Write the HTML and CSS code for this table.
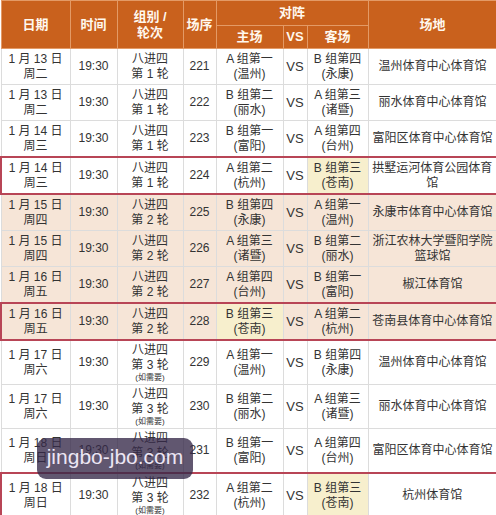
FILE: index.html
```html
<!DOCTYPE html>
<html lang="zh">
<head>
<meta charset="utf-8">
<title>赛程</title>
<link rel="stylesheet" href="styles.css">
</head>
<body>
<div class="wrap">
<table class="sched">
<colgroup>
<col class="c-date"><col class="c-time"><col class="c-round"><col class="c-no"><col class="c-home"><col class="c-vs"><col class="c-away"><col class="c-venue">
</colgroup>
<thead>
<tr class="h1">
<th rowspan="2">日期</th>
<th rowspan="2">时间</th>
<th rowspan="2">组别 /<br>轮次</th>
<th rowspan="2">场序</th>
<th colspan="3" class="dz">对阵</th>
<th rowspan="2">场地</th>
</tr>
<tr class="h2">
<th>主场</th><th>VS</th><th>客场</th>
</tr>
</thead>
<tbody>
<tr><td>1 月 13 日<br>周二</td><td>19:30</td><td>八进四<br>第 1 轮</td><td>221</td><td>A 组第一<br>(温州)</td><td class="vs">VS</td><td>B 组第四<br>(永康)</td><td>温州体育中心体育馆</td></tr>
<tr><td>1 月 13 日<br>周二</td><td>19:30</td><td>八进四<br>第 1 轮</td><td>222</td><td>B 组第二<br>(丽水)</td><td class="vs">VS</td><td>A 组第三<br>(诸暨)</td><td>丽水体育中心体育馆</td></tr>
<tr><td>1 月 14 日<br>周三</td><td>19:30</td><td>八进四<br>第 1 轮</td><td>223</td><td>B 组第一<br>(富阳)</td><td class="vs">VS</td><td>A 组第四<br>(台州)</td><td>富阳区体育中心体育馆</td></tr>
<tr class="mark"><td>1 月 14 日<br>周三</td><td>19:30</td><td>八进四<br>第 1 轮</td><td>224</td><td>A 组第二<br>(杭州)</td><td class="vs">VS</td><td class="hl">B 组第三<br>(苍南)</td><td>拱墅运河体育公园体育<br>馆</td></tr>
<tr class="peach"><td>1 月 15 日<br>周四</td><td>19:30</td><td>八进四<br>第 2 轮</td><td>225</td><td>B 组第四<br>(永康)</td><td class="vs">VS</td><td>A 组第一<br>(温州)</td><td>永康市体育中心体育馆</td></tr>
<tr class="peach"><td>1 月 15 日<br>周四</td><td>19:30</td><td>八进四<br>第 2 轮</td><td>226</td><td>A 组第三<br>(诸暨)</td><td class="vs">VS</td><td>B 组第二<br>(丽水)</td><td>浙江农林大学暨阳学院<br>篮球馆</td></tr>
<tr class="peach"><td>1 月 16 日<br>周五</td><td>19:30</td><td>八进四<br>第 2 轮</td><td>227</td><td>A 组第四<br>(台州)</td><td class="vs">VS</td><td>B 组第一<br>(富阳)</td><td>椒江体育馆</td></tr>
<tr class="peach mark"><td>1 月 16 日<br>周五</td><td>19:30</td><td>八进四<br>第 2 轮</td><td>228</td><td class="hl">B 组第三<br>(苍南)</td><td class="vs">VS</td><td>A 组第二<br>(杭州)</td><td>苍南县体育中心体育馆</td></tr>
<tr class="tall"><td>1 月 17 日<br>周六</td><td>19:30</td><td>八进四<br>第 3 轮<span class="need">(如需要)</span></td><td>229</td><td>A 组第一<br>(温州)</td><td class="vs">VS</td><td>B 组第四<br>(永康)</td><td>温州体育中心体育馆</td></tr>
<tr class="tall"><td>1 月 17 日<br>周六</td><td>19:30</td><td>八进四<br>第 3 轮<span class="need">(如需要)</span></td><td>230</td><td>B 组第二<br>(丽水)</td><td class="vs">VS</td><td>A 组第三<br>(诸暨)</td><td>丽水体育中心体育馆</td></tr>
<tr class="tall"><td>1 月 18 日<br>周日</td><td>19:30</td><td>八进四<br>第 3 轮<span class="need">(如需要)</span></td><td>231</td><td>B 组第一<br>(富阳)</td><td class="vs">VS</td><td>A 组第四<br>(台州)</td><td>富阳区体育中心体育馆</td></tr>
<tr class="tall mark"><td>1 月 18 日<br>周日</td><td>19:30</td><td>八进四<br>第 3 轮<span class="need">(如需要)</span></td><td>232</td><td>A 组第二<br>(杭州)</td><td class="vs">VS</td><td class="hl">B 组第三<br>(苍南)</td><td>杭州体育馆</td></tr>
</tbody>
</table>
<div class="watermark">jingbo-jbo.com</div>
</div>
</body>
</html>
```

FILE: styles.css
```css
html, body {
  margin: 0;
  padding: 0;
  background: #ffffff;
}
.wrap {
  position: relative;
  width: 496px;
  height: 515px;
  overflow: hidden;
}
.sched {
  width: 496px;
  table-layout: fixed;
  border-collapse: collapse;
  font-family: "Liberation Sans", "Noto Sans CJK SC", sans-serif;
  font-size: 12px;
  line-height: 15px;
  color: #333333;
}
.c-date { width: 69px; }
.c-time { width: 47px; }
.c-round { width: 66px; }
.c-no { width: 33px; }
.c-home { width: 67px; }
.c-vs { width: 24px; }
.c-away { width: 61px; }
.c-venue { width: 129px; }

.sched th {
  background: #c9611d;
  color: #fff8ee;
  font-weight: bold;
  font-size: 13px;
  line-height: 16px;
  border: 1px solid #e39a66;
  padding: 0;
  text-align: center;
  vertical-align: middle;
}
.sched .h1 th { height: 24px; }
.sched .h2 th { height: 22px; }
.sched td {
  border: 1px solid #dcdcdc;
  padding: 0 1px;
  height: 35px;
  text-align: center;
  vertical-align: middle;
  background: #ffffff;
  white-space: nowrap;
}
.sched td.vs { font-size: 13px; }
.sched tr.tall td { height: 43px; }
.sched tr.peach td { background: #f6e5d7; }
.sched tr td.hl { background: #f7efcd; }
.sched tr.mark td {
  border-top: 2px solid #b84556;
  border-bottom: 2px solid #b84556;
}
.sched tr.mark td:first-child { border-left: 2px solid #b84556; }
.sched tr.mark td:last-child { border-right: 2px solid #b84556; }
.need {
  display: block;
  font-size: 8px;
  line-height: 10px;
}
.watermark {
  position: absolute;
  left: 37px;
  top: 438px;
  width: 156px;
  height: 41px;
  border-radius: 9px;
  background: rgba(52, 40, 72, 0.78);
  color: #ece6f4;
  font-family: "Liberation Sans", sans-serif;
  font-size: 21px;
  line-height: 38px;
  text-align: center;
}
```
